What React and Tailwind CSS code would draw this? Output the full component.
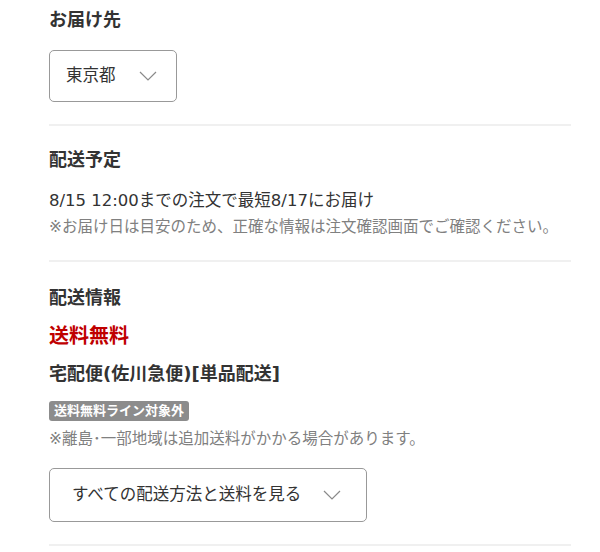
import React from 'react';

const font = { fontFamily: '"DejaVu Sans", "Noto Sans CJK JP", sans-serif' };

function Chevron() {
  return (
    <svg width="18" height="10" viewBox="0 0 18 10" fill="none" className="shrink-0">
      <polyline points="1,1 9,9 17,1" stroke="#8a8a8a" strokeWidth="1.2" />
    </svg>
  );
}

function Divider({ className = '' }) {
  return <div className={`h-[2px] bg-[#f0f0f0] ${className}`} />;
}

export default function App() {
  return (
    <div className="min-h-screen bg-white text-[#333]" style={font}>
      <div className="w-[522px] ml-[49px]">
        {/* お届け先 */}
        <div className="pt-[8px]">
          <h2 className="text-[18px] leading-[24px] font-bold">お届け先</h2>
          <button className="mt-[18px] h-[52px] w-[128px] flex items-center justify-between pl-[16px] pr-[19px] border border-[#999] rounded-[5px] text-[16.5px] text-[#333]">
            <span>東京都</span>
            <Chevron />
          </button>
        </div>
        <Divider className="mt-[22px]" />

        {/* 配送予定 */}
        <div className="pt-[22px] pb-[20px]">
          <h2 className="text-[18px] leading-[24px] font-bold">配送予定</h2>
          <p className="mt-[16px] text-[16.5px] leading-[26px]">8/15 12:00までの注文で最短8/17にお届け</p>
          <p className="text-[15.5px] leading-[26px] text-[#808080] whitespace-nowrap">
            ※お届け日は目安のため、正確な情報は注文確認画面でご確認ください。
          </p>
        </div>
        <Divider />

        {/* 配送情報 */}
        <div className="pt-[24px] pb-[22px]">
          <h2 className="text-[18px] leading-[24px] font-bold">配送情報</h2>
          <p className="mt-[13px] text-[20px] leading-[26px] font-bold text-[#bf0000]">送料無料</p>
          <p className="mt-[12px] text-[18px] leading-[26px] font-bold">宅配便(佐川急便)[単品配送]</p>
          <div className="mt-[11px]">
            <span className="inline-flex items-center h-[20px] px-[5px] rounded-[3px] bg-[#8c8c8c] text-white text-[13px] font-bold leading-none">
              送料無料ライン対象外
            </span>
          </div>
          <p className="mt-[6px] text-[15.5px] leading-[22px] text-[#808080]">
            ※離島･一部地域は追加送料がかかる場合があります。
          </p>
          <button className="mt-[18px] h-[54px] w-[318px] flex items-center pl-[22px] pr-[25px] border border-[#999] rounded-[5px] text-[16.5px] text-[#333]">
            <span>すべての配送方法と送料を見る</span>
            <span className="ml-auto"><Chevron /></span>
          </button>
        </div>
        <Divider />
      </div>
    </div>
  );
}
